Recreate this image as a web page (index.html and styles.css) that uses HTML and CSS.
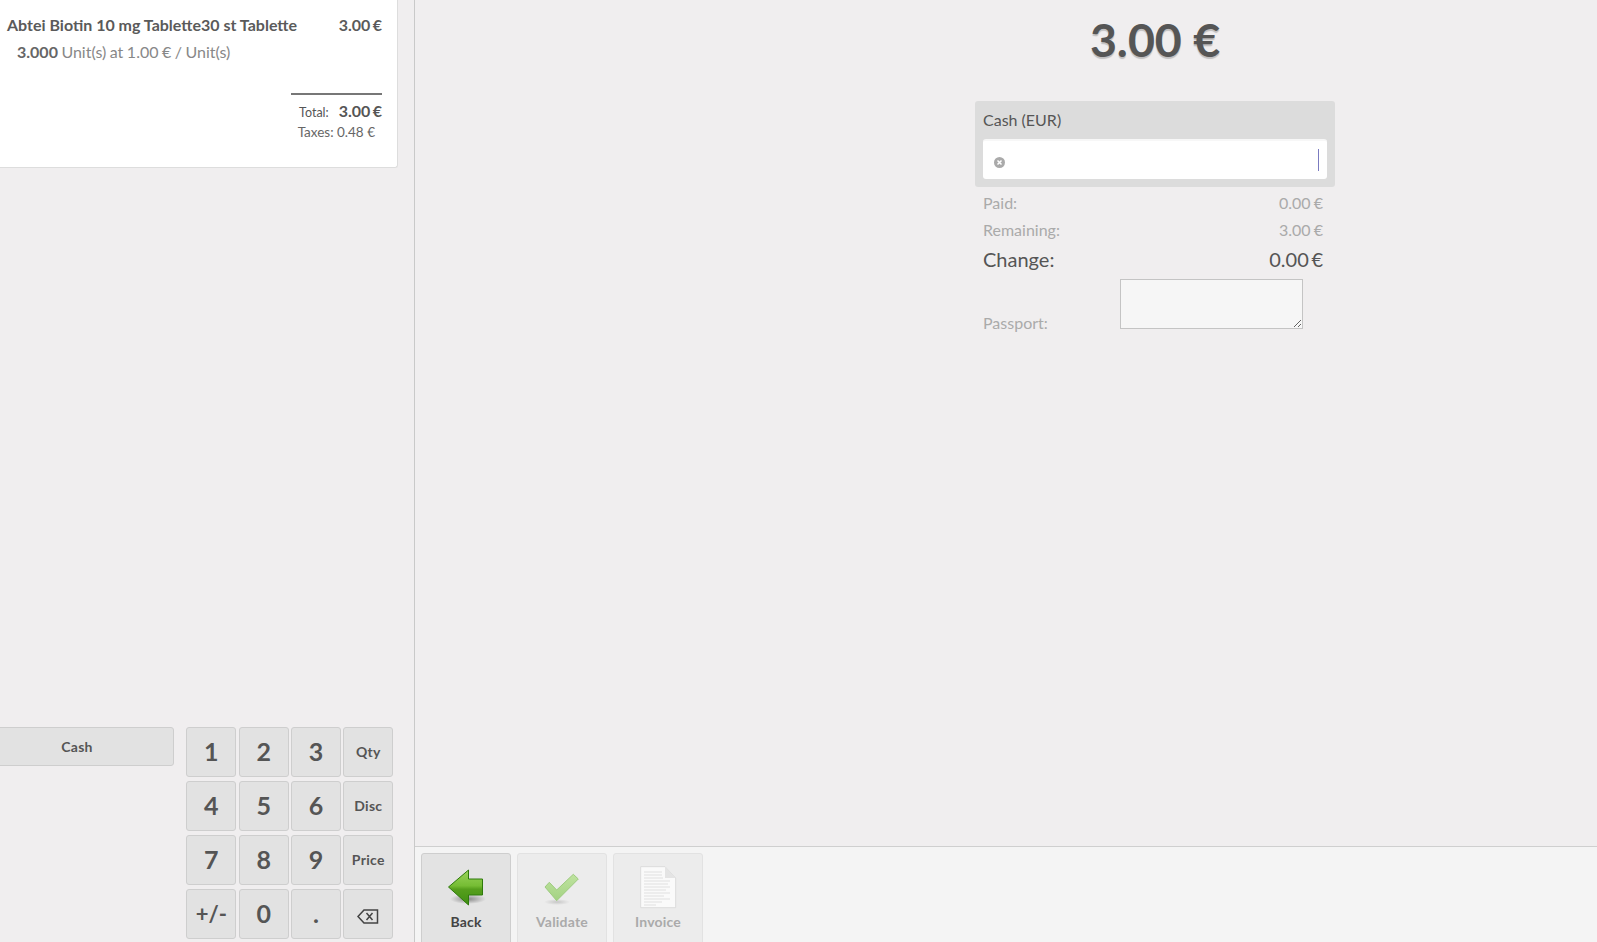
FILE: index.html
```html
<!DOCTYPE html>
<html lang="en">
<head>
    <meta charset="UTF-8">
    <title>Point of Sale</title>
    <link rel="stylesheet" href="styles.css">
</head>
<body>
    <div class="pos">
        <!-- left side: receipt and numpad -->
        <div class="leftpane">
            <div class="receipt">
                <div class="line-top">
                    <span class="product">Abtei Biotin 10 mg Tablette30 st Tablette</span>
                    <span class="price">3.00 €</span>
                </div>
                <div class="line-info"><b>3.000</b> Unit(s) at 1.00 € / Unit(s)</div>
                <div class="summary">
                    <div class="total"><span class="total-label">Total:</span><b>3.00 €</b></div>
                    <div class="taxes">Taxes: 0.48 €</div>
                </div>
            </div>
            <div class="controls">
                <div class="paymodes">
                    <button class="paymode">Cash</button>
                </div>
                <div class="numpad">
                    <button class="key">1</button>
                    <button class="key">2</button>
                    <button class="key">3</button>
                    <button class="key mode">Qty</button>
                    <button class="key">4</button>
                    <button class="key">5</button>
                    <button class="key">6</button>
                    <button class="key mode">Disc</button>
                    <button class="key">7</button>
                    <button class="key">8</button>
                    <button class="key">9</button>
                    <button class="key mode">Price</button>
                    <button class="key sign">+/-</button>
                    <button class="key">0</button>
                    <button class="key dot">.</button>
                    <button class="key">
                        <svg class="backspace" width="22" height="15" viewBox="0 0 22 15">
                            <path d="M1 7.5 L7 1 H20.5 V14 H7 Z" fill="none" stroke="#444" stroke-width="1.5"/>
                            <path d="M9.5 4 L15.5 11 M15.5 4 L9.5 11" stroke="#444" stroke-width="1.5"/>
                        </svg>
                    </button>
                </div>
            </div>
        </div>

        <!-- right side: payment screen -->
        <div class="rightpane">
            <div class="payment">
                <div class="paycol">
                    <div class="due">3.00 €</div>
                    <div class="payline">
                        <div class="payline-name">Cash (EUR)</div>
                        <div class="payline-input">
                            <svg class="clear" width="11" height="11" viewBox="0 0 11 11">
                                <circle cx="5.5" cy="5.5" r="5.5" fill="#aaa"/>
                                <path d="M3.5 3.5 L7.5 7.5 M7.5 3.5 L3.5 7.5" stroke="#fff" stroke-width="1.5"/>
                            </svg>
                            <span class="caret"></span>
                        </div>
                    </div>
                    <div class="row"><span>Paid:</span><span class="amount">0.00 €</span></div>
                    <div class="row"><span>Remaining:</span><span class="amount">3.00 €</span></div>
                    <div class="row change"><span>Change:</span><span class="amount">0.00 €</span></div>
                    <div class="passport">
                        <span class="passport-label">Passport:</span>
                        <textarea class="passport-input"></textarea>
                    </div>
                </div>
            </div>
            <div class="footer">
                <button class="action">
                    <svg width="40" height="44" viewBox="0 0 40 44">
                        <defs>
                            <linearGradient id="back" x1="0" y1="0" x2="0" y2="1">
                                <stop offset="0" stop-color="#9ad35c"/>
                                <stop offset="0.45" stop-color="#76bd34"/>
                                <stop offset="0.55" stop-color="#569f1c"/>
                                <stop offset="1" stop-color="#3f8f12"/>
                            </linearGradient>
                            <radialGradient id="shade">
                                <stop offset="0" stop-color="#000" stop-opacity="0.4"/>
                                <stop offset="1" stop-color="#000" stop-opacity="0"/>
                            </radialGradient>
                        </defs>
                        <ellipse cx="22" cy="34" rx="18" ry="5" fill="url(#shade)"/>
                        <path d="M2.5 22 L22.5 5 V14 H36.5 V30 H22.5 V40 Z" fill="url(#back)" stroke="#2f7a0c" stroke-width="1"/>
                    </svg>
                    <span>Back</span>
                </button>
                <button class="action off">
                    <svg width="40" height="44" viewBox="0 0 40 44">
                        <defs>
                            <linearGradient id="check" x1="0" y1="0" x2="0" y2="1">
                                <stop offset="0" stop-color="#bfe3a0"/>
                                <stop offset="1" stop-color="#a3d282"/>
                            </linearGradient>
                        </defs>
                        <ellipse cx="15" cy="37" rx="13" ry="3" fill="url(#shade)" opacity="0.4"/>
                        <path d="M3 22 L7.3 17.3 L14.7 25 L31.3 9.3 L36.3 14 L14.7 35.7 Z" fill="url(#check)" stroke="#9ecb80" stroke-width="1"/>
                    </svg>
                    <span>Validate</span>
                </button>
                <button class="action off">
                    <svg width="40" height="44" viewBox="0 0 40 44">
                        <path d="M2.7 1.7 H27 L37.7 13 V42.7 H2.7 Z" fill="#fafafa" stroke="#dcdcdc" stroke-width="1"/>
                        <path d="M27 1.7 V13 H37.7 Z" fill="#e4e4e4"/>
                        <path d="M6 7 H24 M6 10 H24 M6 13 H25 M6 16 H32 M6 19 H30 M6 22 H32 M6 25 H28 M6 28 H32 M6 31 H26 M6 34 H32 M6 37 H24 M6 40 H18" stroke="#e0e0e0" stroke-width="1"/>
                    </svg>
                    <span>Invoice</span>
                </button>
            </div>
        </div>
    </div>
</body>
</html>
```

FILE: styles.css
```css
* {
    box-sizing: border-box;
}
html, body {
    margin: 0;
    height: 100%;
    overflow: hidden;
}
body {
    background: #f0eeef;
    color: #555;
    font-family: Lato, "Open Sans", sans-serif;
    font-size: 16px;
}
button {
    font-family: inherit;
    padding: 0;
    margin: 0;
}
.pos {
    display: flex;
    height: 942px;
}

/* left side */
.leftpane {
    width: 415px;
    border-right: 1px solid #c9c9c9;
    display: flex;
    flex-direction: column;
    justify-content: space-between;
    flex: none;
    padding-bottom: 3px;
}
.receipt {
    width: 398px;
    height: 168px;
    background: #fff;
    border: 1px solid #ddd;
    border-top: none;
    border-left: none;
    border-bottom-right-radius: 3px;
    padding: 15px 15px 0 7px;
}
.line-top {
    display: flex;
    justify-content: space-between;
    font-weight: bold;
    font-size: 16px;
    line-height: 20px;
    color: #5a5a5a;
}
.price {
    word-spacing: -1.5px;
}
.line-info {
    margin-top: 7px;
    padding-left: 10px;
    color: #888;
    line-height: 20px;
    word-spacing: -0.6px;
}
.line-info b {
    color: #666;
}
.summary {
    width: 91px;
    margin: 31px 0 0 auto;
    border-top: 2px solid #777;
    padding-top: 6px;
}
.total {
    display: flex;
    justify-content: flex-end;
    align-items: baseline;
    line-height: 20px;
    font-size: 16px;
    word-spacing: -1.5px;
}
.total-label {
    font-size: 12.5px;
    margin-right: 10px;
}
.taxes {
    font-size: 13.5px;
    line-height: 18px;
    text-align: right;
    padding-right: 7px;
    color: #666;
}
.controls {
    display: flex;
    justify-content: space-between;
    padding-right: 20.7px;
}
.paymodes {
    width: 174px;
}
.paymode {
    display: block;
    width: 194px;
    margin-left: -20px;
    height: 39px;
    background: #e2e2e2;
    border: 1px solid #cecece;
    border-radius: 3px;
    color: #555;
    font-size: 14px;
    font-weight: bold;
    letter-spacing: 0.3px;
}
.numpad {
    display: grid;
    grid-template-columns: repeat(4, 50px);
    grid-auto-rows: 50px;
    column-gap: 2.33px;
    row-gap: 4px;
}
.key {
    background: #e2e2e2;
    border: 1px solid #cecece;
    border-radius: 3px;
    color: #555;
    font-size: 25px;
    font-weight: bold;
    display: flex;
    align-items: center;
    justify-content: center;
    padding-bottom: 2px;
}
.key.mode {
    font-size: 14px;
    letter-spacing: 0.3px;
}
.key.sign {
    font-size: 22px;
}
.backspace {
    margin-top: 6px;
}

/* right side */
.rightpane {
    flex: 1;
    display: flex;
    flex-direction: column;
}
.payment {
    flex: 1;
    padding-left: 560px;
}
.paycol {
    width: 360px;
}
.due {
    height: 101px;
    padding-top: 11px;
    text-align: center;
    font-size: 46.5px;
    line-height: 56px;
    font-weight: bold;
    color: #555;
    text-shadow: 0 2px 1px rgba(0, 0, 0, 0.2);
}
.payline {
    height: 86px;
    background: #dcdcdc;
    border-radius: 3px;
    padding: 9px 8px 8px;
    margin-bottom: 6px;
}
.payline-name {
    line-height: 20px;
}
.payline-input {
    margin-top: 9px;
    height: 40px;
    background: #fff;
    border-top: 2px solid #f7f7f7;
    border-radius: 3px;
    display: flex;
    align-items: center;
    justify-content: space-between;
    padding: 0 8px 0 11px;
}
.clear {
    margin-top: 5px;
}
.caret {
    width: 1px;
    height: 22px;
    background: #7b7bc0;
}
.row {
    display: flex;
    justify-content: space-between;
    padding: 0 12px 0 8px;
    height: 27px;
    line-height: 20px;
    color: #aaa;
}
.amount {
    word-spacing: -1px;
}
.row.change {
    height: 32px;
    line-height: 24px;
    font-size: 20px;
    color: #555;
}
.row.change .amount {
    word-spacing: -2.5px;
}
.passport {
    display: flex;
    align-items: flex-end;
    padding-left: 8px;
}
.passport-label {
    width: 137px;
    color: #aaa;
    line-height: 20px;
    margin-bottom: -4px;
}
.passport-input {
    width: 183px;
    height: 50px;
    background: #f6f6f6;
    border: 1px solid #c4c4c4;
    margin: 0;
    display: block;
}
.footer {
    height: 96px;
    flex: none;
    background: #f4f4f4;
    border-top: 1px solid #cfcfcf;
    padding: 6px 0 0 6px;
    display: flex;
    gap: 6px;
    overflow: hidden;
}
.action {
    width: 90px;
    height: 100px;
    background: #e3e3e3;
    border: 1px solid #cecece;
    border-radius: 3px;
    color: #444;
    font-size: 14px;
    font-weight: bold;
    letter-spacing: 0.2px;
    display: flex;
    flex-direction: column;
    align-items: center;
    justify-content: flex-start;
    padding-top: 11px;
}
.action svg {
    display: block;
    margin-bottom: 4px;
}
.action.off {
    background: #ececec;
    border-color: #e2e2e2;
    color: #aaa;
}
```
